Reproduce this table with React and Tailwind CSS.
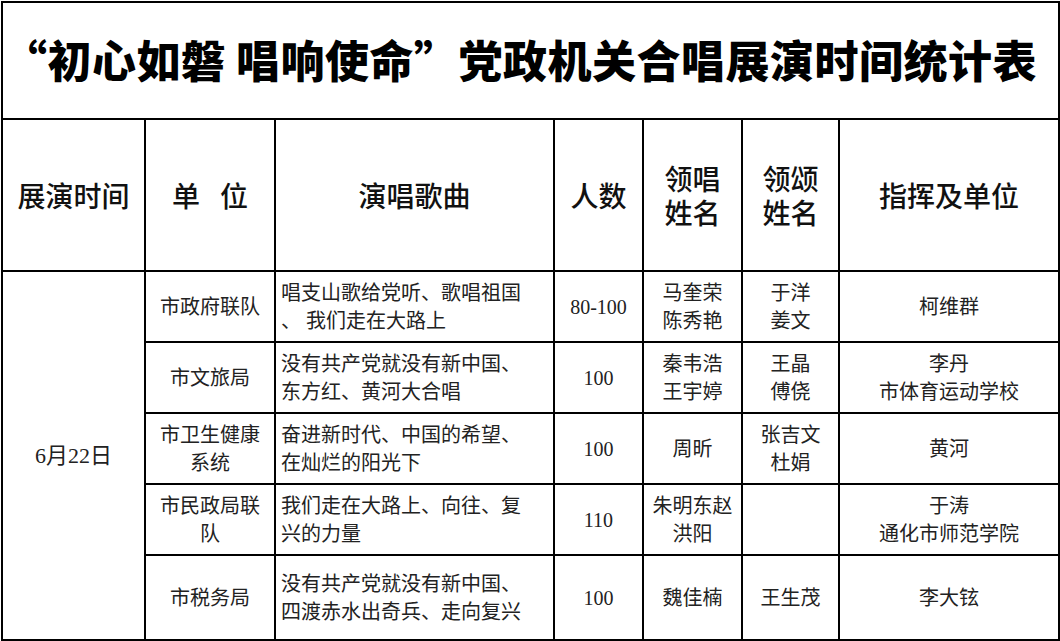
const rows = [
  {
    unit: ['市政府联队'],
    songs: ['唱支山歌给党听、歌唱祖国', '、 我们走在大路上'],
    count: '80-100',
    lead: ['马奎荣', '陈秀艳'],
    recite: ['于洋', '姜文'],
    conductor: ['柯维群'],
    h: 'h-[71px]',
  },
  {
    unit: ['市文旅局'],
    songs: ['没有共产党就没有新中国、', '东方红、黄河大合唱'],
    count: '100',
    lead: ['秦韦浩', '王宇婷'],
    recite: ['王晶', '傅侥'],
    conductor: ['李丹', '市体育运动学校'],
    h: 'h-[71px]',
  },
  {
    unit: ['市卫生健康', '系统'],
    songs: ['奋进新时代、中国的希望、', '在灿烂的阳光下'],
    count: '100',
    lead: ['周昕'],
    recite: ['张吉文', '杜娟'],
    conductor: ['黄河'],
    h: 'h-[71px]',
  },
  {
    unit: ['市民政局联', '队'],
    songs: ['我们走在大路上、向往、复', '兴的力量'],
    count: '110',
    lead: ['朱明东赵', '洪阳'],
    recite: [],
    conductor: ['于涛', '通化市师范学院'],
    h: 'h-[71px]',
  },
  {
    unit: ['市税务局'],
    songs: ['没有共产党就没有新中国、', '四渡赤水出奇兵、走向复兴'],
    count: '100',
    lead: ['魏佳楠'],
    recite: ['王生茂'],
    conductor: ['李大铉'],
    h: 'h-[85px]',
  },
];

const Lines = ({ items }) => (
  <>
    {items.map((t, i) => (
      <div key={i}>{t}</div>
    ))}
  </>
);

const cell = 'border-2 border-black align-middle';
const body = `${cell} text-center text-[20px] leading-[28px] text-[#222]`;

export default function App() {
  return (
    <div className="w-[1060px] h-[641px] bg-white overflow-hidden font-['Liberation_Serif','Noto_Sans_CJK_SC',serif]">
      <table className="ml-px mt-px w-[1057px] table-fixed border-collapse">
        <colgroup>
          <col className="w-[143px]" />
          <col className="w-[130px]" />
          <col className="w-[279px]" />
          <col className="w-[89px]" />
          <col className="w-[99px]" />
          <col className="w-[97px]" />
          <col className="w-[220px]" />
        </colgroup>
        <tbody>
          <tr className="h-[117px]">
            <td
              colSpan={7}
              className={`${cell} text-center pb-[4px] pr-[28px] text-[44px] font-black text-black tracking-[0.5px] whitespace-nowrap font-['Noto_Sans_CJK_SC',sans-serif]`}
            >
              “初心如磐 唱响使命”党政机关合唱展演时间统计表
            </td>
          </tr>
          <tr className="h-[152px] text-[28px] font-medium leading-[34px] text-[#111] font-['Noto_Sans_CJK_SC',sans-serif]">
            <td className={`${cell} text-center`}>展演时间</td>
            <td className={`${cell} text-center`}>
              单<span className="inline-block w-[20px]" />位
            </td>
            <td className={`${cell} text-center`}>演唱歌曲</td>
            <td className={`${cell} text-center`}>人数</td>
            <td className={`${cell} text-center`}>
              <div>领唱</div>
              <div>姓名</div>
            </td>
            <td className={`${cell} text-center`}>
              <div>领颂</div>
              <div>姓名</div>
            </td>
            <td className={`${cell} text-center`}>指挥及单位</td>
          </tr>
          {rows.map((r, i) => (
            <tr key={i} className={r.h}>
              {i === 0 && (
                <td rowSpan={5} className={`${cell} text-center text-[22px] text-[#222]`}>
                  6月22日
                </td>
              )}
              <td className={body}>
                <Lines items={r.unit} />
              </td>
              <td className={`${cell} text-left pl-[5px] text-[20px] leading-[28px] text-[#222] whitespace-nowrap`}>
                <Lines items={r.songs} />
              </td>
              <td className={body}>{r.count}</td>
              <td className={body}>
                <Lines items={r.lead} />
              </td>
              <td className={body}>
                <Lines items={r.recite} />
              </td>
              <td className={body}>
                <Lines items={r.conductor} />
              </td>
            </tr>
          ))}
        </tbody>
      </table>
    </div>
  );
}
